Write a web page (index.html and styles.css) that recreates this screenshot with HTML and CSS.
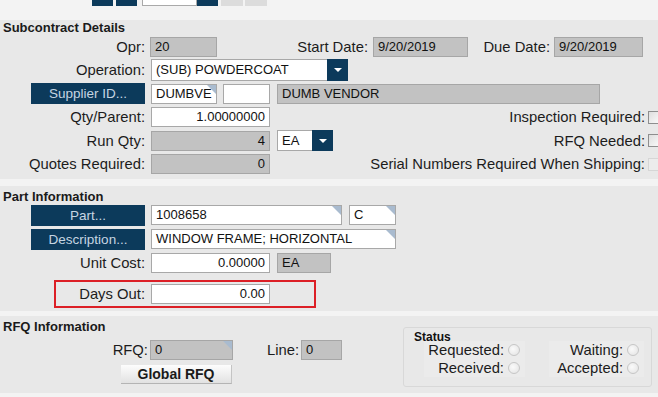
FILE: index.html
```html
<!DOCTYPE html>
<html>
<head>
    <meta charset="UTF-8">
    <title>Subcontract Details</title>
    <link rel="stylesheet" href="styles.css">
</head>
<body>
    <div class="toolbar">
        <span class="tb nav"></span>
        <span class="tb nav"></span>
        <span class="tb-input"></span>
        <span class="tb nav joined"></span>
        <span class="tb off"></span>
        <span class="tb off"></span>
    </div>

    <div class="section sub">
        <div class="section-title">Subcontract Details</div>
        <div class="rows">
            <div class="row">
                <span class="lbl">Opr:</span>
                <span class="field ro w-opr">20</span>
                <span class="lbl-start">Start Date:</span>
                <span class="field ro w-start">9/20/2019</span>
                <span class="lbl-due">Due Date:</span>
                <span class="field ro w-due">9/20/2019</span>
            </div>
            <div class="row">
                <span class="lbl">Operation:</span>
                <span class="select w-op">
                    <span class="select-text">(SUB) POWDERCOAT</span>
                    <span class="select-arrow"></span>
                </span>
            </div>
            <div class="row">
                <span class="btn-nav">Supplier ID...</span>
                <span class="field corner w-code">DUMBVE</span>
                <span class="field w-small gap"></span>
                <span class="field ro w-vendor gap">DUMB VENDOR</span>
            </div>
            <div class="row">
                <span class="lbl">Qty/Parent:</span>
                <span class="field num w-qty">1.00000000</span>
                <span class="check-wrap">
                    <span class="check-lbl">Inspection Required:</span>
                    <span class="check"></span>
                </span>
            </div>
            <div class="row">
                <span class="lbl">Run Qty:</span>
                <span class="field ro num w-qty">4</span>
                <span class="select w-uom gap">
                    <span class="select-text">EA</span>
                    <span class="select-arrow"></span>
                </span>
                <span class="check-wrap">
                    <span class="check-lbl">RFQ Needed:</span>
                    <span class="check"></span>
                </span>
            </div>
            <div class="row">
                <span class="lbl">Quotes Required:</span>
                <span class="field ro num w-qty">0</span>
                <span class="check-wrap">
                    <span class="check-lbl">Serial Numbers Required When Shipping:</span>
                    <span class="check disabled"></span>
                </span>
            </div>
        </div>
    </div>

    <div class="section part">
        <div class="section-title">Part Information</div>
        <div class="rows wide-gap">
            <div class="row">
                <span class="btn-nav">Part...</span>
                <span class="field corner w-part">1008658</span>
                <span class="field corner w-rev gap">C</span>
            </div>
            <div class="row">
                <span class="btn-nav">Description...</span>
                <span class="field corner w-desc">WINDOW FRAME; HORIZONTAL</span>
            </div>
            <div class="row">
                <span class="lbl">Unit Cost:</span>
                <span class="field num w-qty">0.00000</span>
                <span class="field ro w-ea gap">EA</span>
            </div>
        </div>
        <div class="highlight">
            <span class="lbl lbl-days">Days Out:</span>
            <span class="field num w-qty">0.00</span>
        </div>
    </div>

    <div class="section rfq">
        <div class="rfq-left">
            <div class="section-title">RFQ Information</div>
            <div class="rfq-row">
                <span class="lbl lbl-rfq">RFQ:</span>
                <span class="field ro corner w-rfq">0</span>
                <span class="lbl-line">Line:</span>
                <span class="field ro w-line">0</span>
            </div>
            <div class="btn-plain">Global RFQ</div>
        </div>
        <div class="status">
            <div class="status-title">Status</div>
            <div class="status-cols">
                <div class="status-col first">
                    <div class="opt">Requested: <span class="radio"></span></div>
                    <div class="opt">Received: <span class="radio"></span></div>
                </div>
                <div class="status-col">
                    <div class="opt">Waiting: <span class="radio"></span></div>
                    <div class="opt">Accepted: <span class="radio"></span></div>
                </div>
            </div>
        </div>
    </div>
</body>
</html>
```

FILE: styles.css
```css
body {
    margin: 0;
    padding: 0;
    width: 658px;
    height: 397px;
    overflow: hidden;
    background: #f3f3f3;
    font-family: "Liberation Sans", Arial, sans-serif;
    color: #1c1c1c;
}

/* top toolbar, only its lower edge is visible */
.toolbar {
    display: flex;
    align-items: flex-start;
    height: 20px;
    padding-left: 92px;
}

.tb {
    width: 21px;
    height: 6px;
    margin-right: 3px;
}

.tb.nav {
    background: #0c3a5b;
}

.tb.joined {
    margin-right: 3px;
}

.tb.off {
    width: 22px;
    margin-right: 2px;
    background: #dcdcdc;
}

.tb-input {
    width: 53px;
    height: 5px;
    margin-left: 2px;
    background: #fff;
    border: 1px solid #a9a9a9;
    border-top: none;
}

/* sections */
.section {
    background: #e8e8e8;
}

.section-title {
    font-size: 13px;
    font-weight: bold;
    line-height: 16px;
    padding-left: 3px;
    color: #1a1a1a;
}

.sub {
    padding-bottom: 4px;
}

.part {
    margin-top: 7px;
    padding-bottom: 3px;
}

.part .section-title,
.rfq .section-title {
    padding-top: 3px;
}

.rows {
    display: flex;
    flex-direction: column;
    gap: 2.6px;
}

.rows.wide-gap {
    gap: 3px;
}

.row {
    display: flex;
    align-items: center;
    height: 21px;
}

.lbl {
    width: 145px;
    flex: 0 0 145px;
    text-align: right;
    font-size: 14.8px;
    margin-right: 6px;
    white-space: nowrap;
}

.lbl-start,
.lbl-due,
.lbl-line {
    font-size: 14.8px;
    text-align: right;
    white-space: nowrap;
}

.lbl-start {
    width: 151px;
    margin-right: 5px;
}

.lbl-due {
    width: 82px;
    margin-right: 4px;
}

/* fields */
.field {
    position: relative;
    box-sizing: border-box;
    height: 20px;
    line-height: 18px;
    padding: 0 4px;
    font-size: 13px;
    color: #111;
    background: #fff;
    border: 1px solid #a8a8a8;
    white-space: nowrap;
    overflow: hidden;
}

.field.ro {
    background: #c2c2c2;
    border-color: #a6a6a6;
}

.field.num {
    text-align: right;
}

.field.gap,
.select.gap {
    margin-left: 7px;
}

.field.corner::after {
    content: "";
    position: absolute;
    top: 0;
    right: 0;
    border-top: 9px solid #a9bbcf;
    border-left: 9px solid transparent;
}

.w-opr { width: 67px; margin-left: -1px; }
.w-start { width: 95px; }
.w-due { width: 89px; }
.w-code { width: 66px; }
.w-small { width: 47px; margin-left: 6px !important; }
.w-vendor { width: 323px; }
.w-qty { width: 119px; }
.w-part { width: 191px; }
.w-rev { width: 47px; }
.w-desc { width: 245px; }
.w-ea { width: 54px; }
.w-rfq { width: 83px; }
.w-line { width: 41px; }

/* dropdowns */
.select {
    display: flex;
    height: 22px;
    box-sizing: border-box;
}

.w-op { width: 197px; }
.w-uom { width: 56px; height: 21px; }

.select-text {
    flex: 1;
    box-sizing: border-box;
    background: #fff;
    border: 1px solid #a8a8a8;
    border-right: none;
    font-size: 13px;
    line-height: 19px;
    padding-left: 4px;
    color: #111;
}

.select-arrow {
    width: 21px;
    background: #0c3a5b;
    display: flex;
    align-items: center;
    justify-content: center;
}

.select-arrow::before {
    content: "";
    border-top: 4px solid #fff;
    border-left: 4px solid transparent;
    border-right: 4px solid transparent;
}

/* navy link buttons */
.btn-nav {
    box-sizing: border-box;
    width: 114px;
    height: 21px;
    margin-left: 31px;
    margin-right: 6px;
    background: #0c3a5b;
    color: #c6d5e2;
    font-size: 13.5px;
    line-height: 21px;
    text-align: center;
}

/* checkboxes */
.check-wrap {
    margin-left: auto;
    display: flex;
    align-items: center;
    margin-right: -3px;
}

.check-lbl {
    font-size: 14.8px;
    white-space: nowrap;
}

.check {
    width: 13px;
    height: 13px;
    margin-left: 3px;
    box-sizing: border-box;
    border: 1px solid #8e8e8e;
    background: linear-gradient(135deg, #dedede, #fafafa);
}

.check.disabled {
    border-color: #d6d6d6;
    background: #ececec;
}

/* highlighted days out row */
.highlight {
    display: flex;
    align-items: center;
    box-sizing: border-box;
    width: 262px;
    height: 28px;
    margin: 6px 0 0 54px;
    border: 2px solid #dc1f26;
}

.lbl-days {
    width: 89px;
    flex: 0 0 89px;
}

/* rfq section */
.rfq {
    display: flex;
    margin-top: 5px;
    height: 77px;
}

.rfq-left {
    flex: 0 0 403px;
}

.rfq-row {
    display: flex;
    align-items: center;
    margin-top: 5px;
    height: 20px;
}

.lbl-rfq {
    width: 148px;
    flex: 0 0 148px;
    margin-right: 2px;
}

.lbl-line {
    width: 66px;
    margin-right: 2px;
}

.btn-plain {
    box-sizing: border-box;
    width: 111px;
    height: 19px;
    margin: 5px 0 0 121px;
    background: linear-gradient(#fdfdfd, #e2e2e2);
    border-right: 1px solid #c4c4c4;
    border-bottom: 1px solid #b4b4b4;
    font-size: 14px;
    font-weight: bold;
    line-height: 18px;
    text-align: center;
    color: #1a1a1a;
}

/* status box */
.status {
    box-sizing: border-box;
    width: 249px;
    height: 60px;
    margin-top: 11px;
    border: 1px solid #d8d8d8;
    border-radius: 3px;
    padding: 3px 0 0 10px;
}

.status-title {
    font-size: 12px;
    font-weight: bold;
    line-height: 12px;
    color: #111;
}

.status-cols {
    display: flex;
    margin-top: -2px;
}

.status-col {
    width: 95px;
    background: #ebebeb;
}

.status-col.first {
    width: 101px;
    margin-left: 10px;
    margin-right: 24px;
}

.opt {
    display: flex;
    justify-content: flex-end;
    align-items: center;
    gap: 4px;
    height: 18px;
    font-size: 14.8px;
    padding-right: 5px;
    white-space: nowrap;
}

.radio {
    width: 12px;
    height: 12px;
    box-sizing: border-box;
    border-radius: 50%;
    border: 1px solid #c6c6c6;
    background: radial-gradient(circle at 40% 40%, #fafafa, #e2e2e2);
}
```
